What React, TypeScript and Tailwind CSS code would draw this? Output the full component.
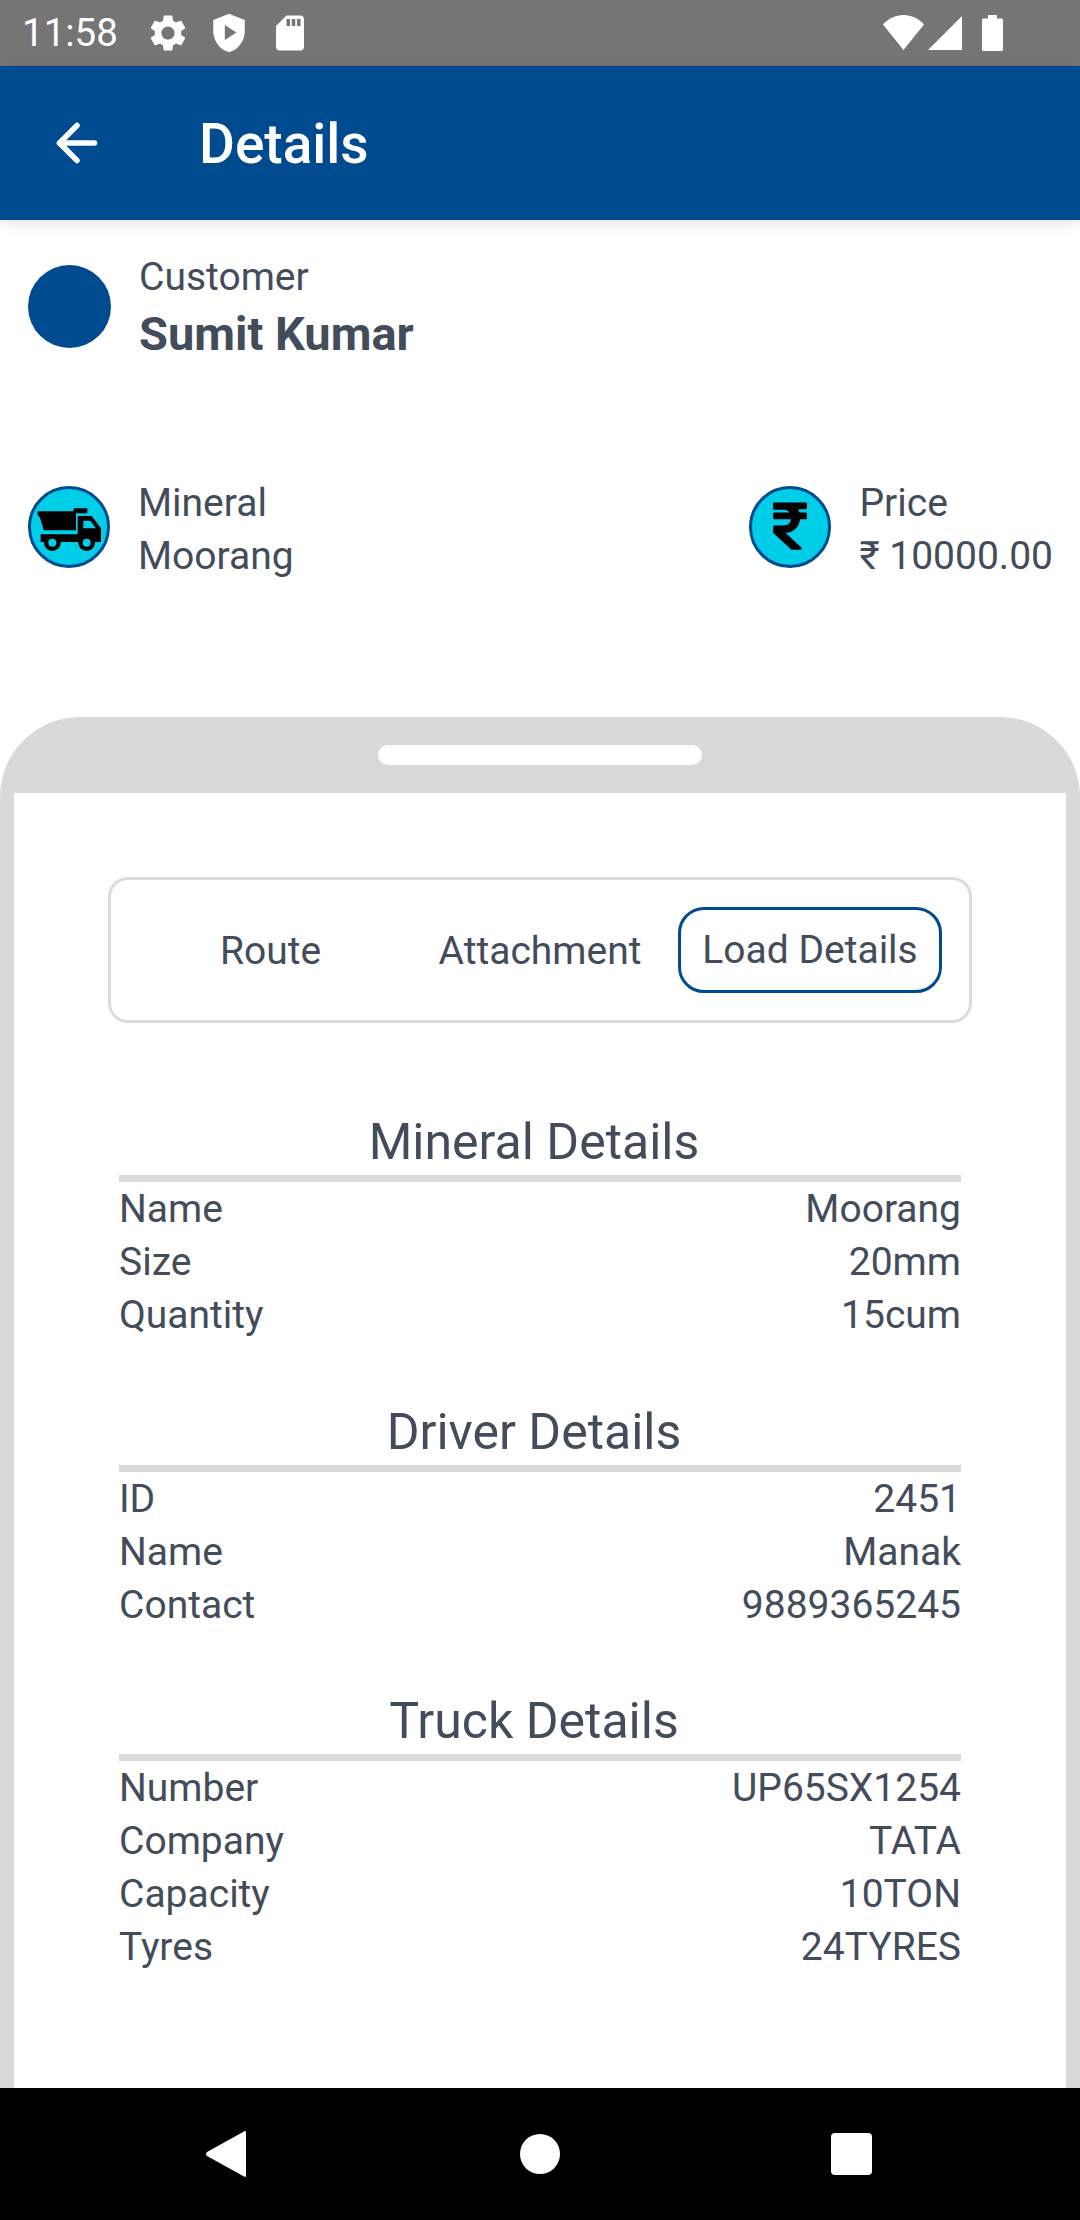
import { ArrowLeft } from "lucide-react";
import { FaRupeeSign } from "react-icons/fa";

const sections = [
  {
    title: "Mineral Details",
    rows: [
      ["Name", "Moorang"],
      ["Size", "20mm"],
      ["Quantity", "15cum"],
    ],
  },
  {
    title: "Driver Details",
    rows: [
      ["ID", "2451"],
      ["Name", "Manak"],
      ["Contact", "9889365245"],
    ],
  },
  {
    title: "Truck Details",
    rows: [
      ["Number", "UP65SX1254"],
      ["Company", "TATA"],
      ["Capacity", "10TON"],
      ["Tyres", "24TYRES"],
    ],
  },
];

function StatusBar() {
  return (
    <div className="h-[66px] shrink-0 bg-[#757575] flex items-center text-white">
      <span className="ml-[22px] text-[38.5px] leading-[66px] w-[124px] -mt-[1px]">11:58</span>
      <svg viewBox="0 0 24 24" className="w-[44px] h-[44px] -mt-[1px] fill-white">
        <path d="M19.14 12.94c.04-.3.06-.61.06-.94 0-.32-.02-.64-.07-.94l2.03-1.58c.18-.14.23-.41.12-.61l-1.92-3.32c-.12-.22-.37-.29-.59-.22l-2.39.96c-.5-.38-1.03-.7-1.62-.94l-.36-2.54c-.04-.24-.24-.41-.48-.41h-3.84c-.24 0-.43.17-.47.41l-.36 2.54c-.59.24-1.13.57-1.62.94l-2.39-.96c-.22-.08-.47 0-.59.22L2.74 8.87c-.12.21-.08.47.12.61l2.03 1.58c-.05.3-.09.63-.09.94s.02.64.07.94l-2.03 1.58c-.18.14-.23.41-.12.61l1.92 3.32c.12.22.37.29.59.22l2.39-.96c.5.38 1.03.7 1.62.94l.36 2.54c.05.24.24.41.48.41h3.84c.24 0 .44-.17.47-.41l.36-2.54c.59-.24 1.13-.56 1.62-.94l2.39.96c.22.08.47 0 .59-.22l1.92-3.32c.12-.22.07-.47-.12-.61l-2.01-1.58zM12 15.6c-1.98 0-3.6-1.62-3.6-3.6s1.62-3.6 3.6-3.6 3.6 1.62 3.6 3.6-1.62 3.6-3.6 3.6z" />
      </svg>
      <svg viewBox="0 0 24 24" className="w-[42px] h-[42px] ml-[18px] -mt-[1px]">
        <path fill="#fff" d="M12 1 3 4.6V11c0 5.55 3.84 10.74 9 12 5.16-1.26 9-6.45 9-12V4.6z" />
        <path fill="#757575" d="M9.6 7.4v8.6l6.6-4.3z" />
      </svg>
      <svg viewBox="0 0 24 24" className="w-[42px] h-[42px] ml-[19px] -mt-[1px] fill-white">
        <path d="M18 2h-8L4.02 8 4 20c0 1.1.9 2 2 2h12c1.1 0 2-.9 2-2V4c0-1.1-.9-2-2-2zm-6 6h-2V4h2v4zm3 0h-2V4h2v4zm3 0h-2V4h2v4z" />
      </svg>
      <div className="ml-auto flex items-center mr-[77px] -mt-[1px]">
        <svg viewBox="0 0 41 35" className="w-[41px] h-[35px] fill-white">
          <path d="M0 9.500C5.500 3.500 12.500 0 20.500 0S35.500 3.500 41 9.500L20.500 35z" />
        </svg>
        <svg viewBox="0 0 34 34" className="w-[34px] h-[34px] ml-[4px] fill-white">
          <path d="M34 0v34H0z" />
        </svg>
        <svg viewBox="0 0 21 36" className="w-[21px] h-[36px] ml-[20px] fill-white">
          <path d="M6 0h9v3.500h4.500c.8 0 1.500.7 1.500 1.500v29.500c0 .8-.7 1.500-1.500 1.500H1.500C.7 36 0 35.300 0 34.500V5c0-.8.7-1.500 1.500-1.500H6z" />
        </svg>
      </div>
    </div>
  );
}

function TruckIcon() {
  return (
    <div className="w-[82px] h-[82px] rounded-full bg-[#00cde8] border-[3px] border-[#004a8f] shrink-0 overflow-hidden">
      <svg viewBox="93 744 228 228" className="w-full h-full">
        <path d="M113 811H220L222 802H262V817H228V868H131L120 830 113 822Z" fill="#000" />
        <path d="M233 825H275L303 862V903H122V880H233ZM250 839V862H288L271 839Z" fill="#000" fillRule="evenodd" />
        <circle cx="157" cy="905" r="25" fill="#000" />
        <circle cx="157" cy="905" r="12" fill="#00cde8" />
        <circle cx="260" cy="905" r="25" fill="#000" />
        <circle cx="260" cy="905" r="12" fill="#00cde8" />
      </svg>
    </div>
  );
}

function RupeeIcon() {
  return (
    <div className="w-[82px] h-[82px] rounded-full bg-[#00cde8] border-[3px] border-[#004a8f] shrink-0 flex items-center justify-center">
      <FaRupeeSign className="text-black text-[54px] -mt-[3px]" />
    </div>
  );
}

export default function App() {
  return (
    <div className="w-[1080px] h-[2220px] flex flex-col overflow-hidden bg-white font-['Roboto',sans-serif] text-[#434c5a]">
      <StatusBar />

      {/* App bar */}
      <div className="h-[154px] shrink-0 bg-[#004a8f] flex items-center text-white shadow-[0_4px_12px_rgba(0,0,0,0.1)] z-10">
        <ArrowLeft className="ml-[47px] w-[60px] h-[60px] -mt-[1px]" strokeWidth={2.2} />
        <span className="ml-[92px] text-[55px] font-medium leading-none mt-[3px]">Details</span>
      </div>

      {/* Customer */}
      <div className="h-[124px] mt-[35px] shrink-0 flex items-start pl-[28px]">
        <div className="w-[83px] h-[83px] mt-[10px] rounded-full bg-[#004a8f] shrink-0" />
        <div className="ml-[28px] -mt-[4px]">
          <div className="text-[39px] leading-[52px]">Customer</div>
          <div className="text-[47px] leading-[62px] font-bold">Sumit Kumar</div>
        </div>
      </div>

      {/* Mineral and price */}
      <div className="mt-[92px] h-[246px] shrink-0 flex justify-between items-start pl-[28px] pr-[27px]">
        <div className="flex items-center">
          <TruckIcon />
          <div className="ml-[28px] mt-[6px] text-[39px] leading-[53px]">
            <div>Mineral</div>
            <div>Moorang</div>
          </div>
        </div>
        <div className="flex items-center">
          <RupeeIcon />
          <div className="ml-[28px] mt-[6px] text-[39px] leading-[53px]">
            <div>Price</div>
            <div>₹ 10000.00</div>
          </div>
        </div>
      </div>

      {/* Bottom sheet */}
      <div className="flex-1 min-h-0 bg-[#d9d9d9] rounded-t-[80px] px-[14px] pt-[28px] flex flex-col">
        <div className="w-[324px] h-[20px] mx-auto shrink-0 rounded-full bg-white" />
        <div className="flex-1 min-h-0 mt-[28px] bg-white pt-[84px] flex flex-col items-center">
          <div className="w-[864px] h-[146px] rounded-[20px] border-[3px] border-[#dcdcdc] flex items-center shrink-0">
            <div className="w-[319px] text-center text-[39px] leading-none mt-[3px]">Route</div>
            <div className="w-[220px] text-center text-[39px] leading-none mt-[3px]">Attachment</div>
            <div className="ml-[28px] w-[264px] h-[86px] rounded-[26px] border-[3px] border-[#004a8f] flex items-center justify-center text-[39px] leading-none">
              <span className="mt-[1px]">Load Details</span>
            </div>
          </div>

          <div className="w-[842px] mt-[87px] flex flex-col gap-[57.5px]">
            {sections.map((s) => (
              <div key={s.title}>
                <div className="text-center text-[50px] leading-[65px] pr-[12px]">{s.title}</div>
                <div className="h-[7px] bg-[#d9d9d9]" />
                <div className="pt-[1px]">
                  {s.rows.map(([k, v]) => (
                    <div key={k} className="flex justify-between text-[39px] leading-[53px]">
                      <span>{k}</span>
                      <span>{v}</span>
                    </div>
                  ))}
                </div>
              </div>
            ))}
          </div>
        </div>
      </div>

      {/* Nav bar */}
      <div className="h-[132px] shrink-0 bg-black relative z-10 flex items-center">
        <svg viewBox="0 0 40 46" className="w-[40px] h-[46px] ml-[206px] fill-white">
          <path d="M38 0.500c1-.8 2-.3 2 1v43c0 1.300-1 1.800-2 1L1 25c-1.300-1.200-1.300-2.800 0-4z" />
        </svg>
        <div className="w-[40px] h-[40px] ml-[274px] rounded-full bg-white" />
        <div className="w-[41px] h-[42px] ml-[271px] rounded-[4px] bg-white" />
      </div>
    </div>
  );
}
